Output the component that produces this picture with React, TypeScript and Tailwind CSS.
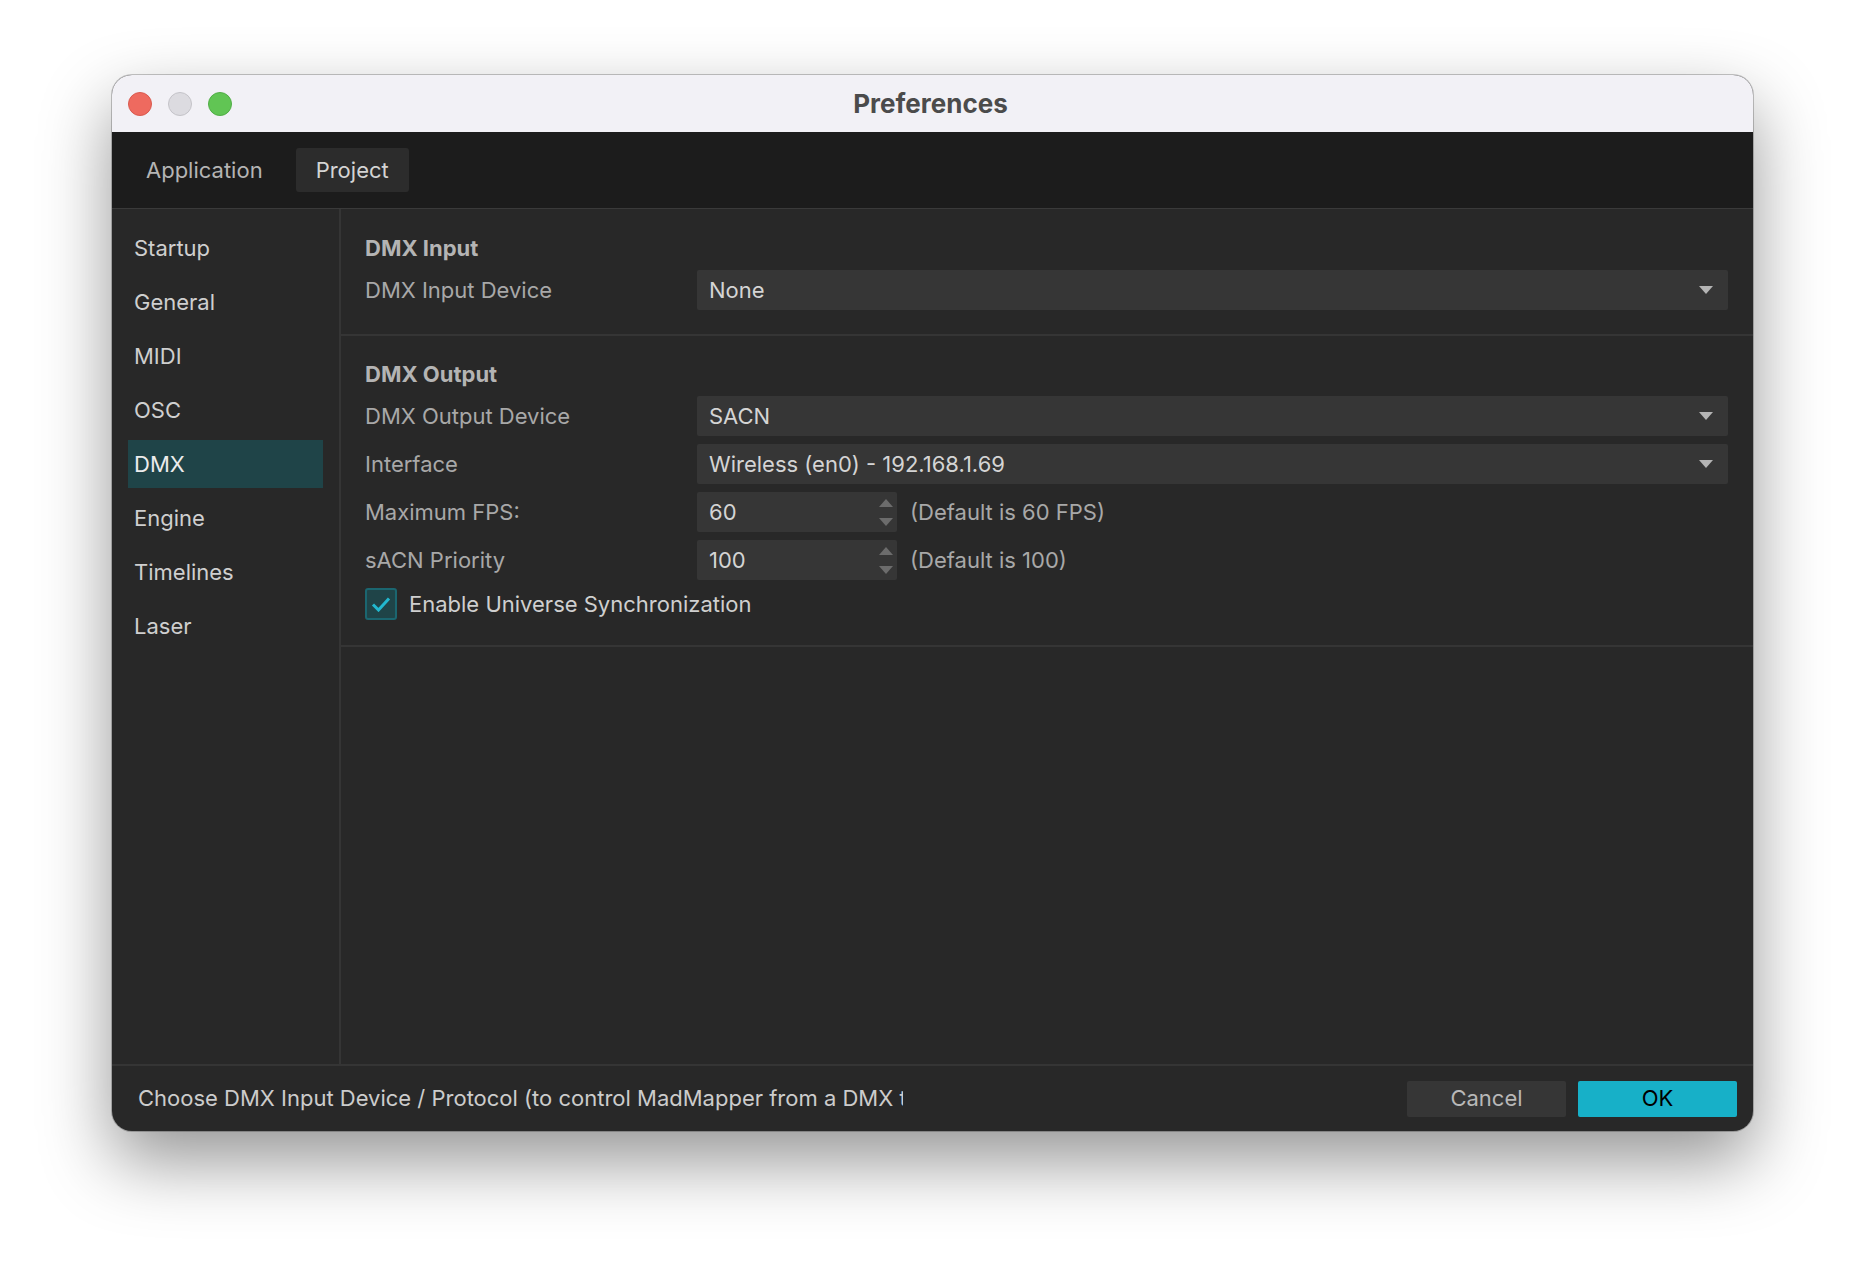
import React from 'react';

const FONT = { fontFamily: 'Inter, "Noto Sans", sans-serif' };

const SIDEBAR = ['Startup', 'General', 'MIDI', 'OSC', 'DMX', 'Engine', 'Timelines', 'Laser'];

function Caret({ className = '' }: { className?: string }) {
  return (
    <svg width="14" height="8" viewBox="0 0 14 8" className={className}>
      <path d="M0 0 H14 L7 8 Z" fill="currentColor" />
    </svg>
  );
}

function Combo({ value }: { value: string }) {
  return (
    <div className="flex h-10 flex-1 items-center justify-between rounded-[2px] bg-[#363636] pl-[12px] pr-[15px] text-[22px] text-[#d4d4d4]">
      <span>{value}</span>
      <Caret className="text-[#b4b4b4]" />
    </div>
  );
}

function Spin({ value, hint }: { value: string; hint: string }) {
  return (
    <div className="flex items-center gap-[13px]">
      <div className="flex h-10 w-[200px] items-center justify-between rounded-[2px] bg-[#363636] pl-[12px] pr-[4px] text-[22px] text-[#d4d4d4]">
        <span>{value}</span>
        <div className="flex flex-col items-center gap-[11px] text-[#6c6c6c]">
          <Caret className="rotate-180" />
          <Caret />
        </div>
      </div>
      <span className="text-[22px] text-[#a8a8a8]">{hint}</span>
    </div>
  );
}

function Row({ label, children }: { label: string; children: React.ReactNode }) {
  return (
    <div className="flex items-center">
      <div className="w-[332px] text-[22px] text-[#a8a8a8]">{label}</div>
      {children}
    </div>
  );
}

export default function App() {
  return (
    <div className="h-[1280px] w-[1864px] bg-white pl-[112px] pt-[75px]" style={FONT}>
      <div className="flex h-[1056px] w-[1641px] flex-col overflow-hidden rounded-[20px] bg-[#282828] shadow-[0_30px_70px_rgba(0,0,0,0.42),0_0_0_1px_rgba(0,0,0,0.22)]">
        {/* title bar */}
        <div className="relative flex h-[57px] shrink-0 items-center bg-[#f2f1f6] pl-[128px]">
          <div className="absolute left-[16px] top-1/2 flex -translate-y-1/2 gap-4">
            <span className="h-6 w-6 rounded-full border border-[#d95a4f] bg-[#ee6a5f]" />
            <span className="h-6 w-6 rounded-full border border-[#c4c3c8] bg-[#dcdbe0]" />
            <span className="h-6 w-6 rounded-full border border-[#51ad46] bg-[#61c554]" />
          </div>
          <div className="flex-1 -translate-x-[66px] text-center text-[26px] font-bold text-[#4b4b4b]">Preferences</div>
        </div>

        {/* tabs */}
        <div className="flex h-[77px] shrink-0 items-center gap-[13px] border-b border-[#3a3a3a] bg-[#1c1c1c] pl-[14px]">
          <div className="flex h-11 items-center rounded-[3px] px-5 text-[22px] text-[#b4b4b4]">Application</div>
          <div className="flex h-11 items-center rounded-[3px] bg-[#2c2c2c] px-5 text-[22px] text-[#d4d4d4]">Project</div>
        </div>

        {/* body */}
        <div className="flex flex-1">
          <div className="flex w-[229px] shrink-0 flex-col gap-[6px] border-r-2 border-[#353535] pl-4 pr-[16px] pt-[15px]">
            {SIDEBAR.map(item => (
              <div
                key={item}
                className={
                  item === 'DMX'
                    ? 'flex h-12 items-center bg-[#1f4448] pl-[6px] text-[22px] text-[#ececec]'
                    : 'flex h-12 items-center pl-[6px] text-[22px] text-[#cfcfcf]'
                }
              >
                {item}
              </div>
            ))}
          </div>

          <div className="flex flex-1 flex-col">
            <div className="border-b-2 border-[#353535] pb-[24px] pl-6 pr-[25px] pt-[23px]">
              <div className="mb-[6px] flex h-8 items-center text-[22px] font-bold text-[#b4b4b4]">DMX Input</div>
              <Row label="DMX Input Device">
                <Combo value="None" />
              </Row>
            </div>

            <div className="flex flex-col gap-2 border-b-2 border-[#353535] pb-[25px] pl-6 pr-[25px] pt-[22px]">
              <div className="-mb-[2px] flex h-8 items-center text-[22px] font-bold text-[#b4b4b4]">DMX Output</div>
              <Row label="DMX Output Device">
                <Combo value="SACN" />
              </Row>
              <Row label="Interface">
                <Combo value="Wireless (en0) - 192.168.1.69" />
              </Row>
              <Row label="Maximum FPS:">
                <Spin value="60" hint="(Default is 60 FPS)" />
              </Row>
              <Row label="sACN Priority">
                <Spin value="100" hint="(Default is 100)" />
              </Row>
              <div className="flex h-8 items-center gap-3">
                <div className="flex h-8 w-8 items-center justify-center rounded-[3px] border-2 border-[#1b6670] bg-[#1f4448]">
                  <svg width="20" height="16" viewBox="0 0 20 16" fill="none">
                    <path d="M2 8.5 L7.5 14 L18 2.5" stroke="#22b8cf" strokeWidth="3" />
                  </svg>
                </div>
                <span className="text-[22px] text-[#cfcfcf]">Enable Universe Synchronization</span>
              </div>
            </div>
          </div>
        </div>

        {/* footer */}
        <div className="flex h-[67px] shrink-0 items-center justify-between border-t-2 border-[#353535] pl-[26px] pr-4">
          <div className="w-[765px] overflow-hidden whitespace-nowrap text-[22px] text-[#cccccc]">
            Choose DMX Input Device / Protocol (to control MadMapper from a DMX table or software)
          </div>
          <div className="flex gap-3">
            <button className="h-9 w-[159px] rounded-[2px] bg-[#363636] text-[22px] text-[#b8b8b8]">Cancel</button>
            <button className="h-9 w-[159px] rounded-[2px] bg-[#17b0c8] text-[22px] text-black">OK</button>
          </div>
        </div>
      </div>
    </div>
  );
}
